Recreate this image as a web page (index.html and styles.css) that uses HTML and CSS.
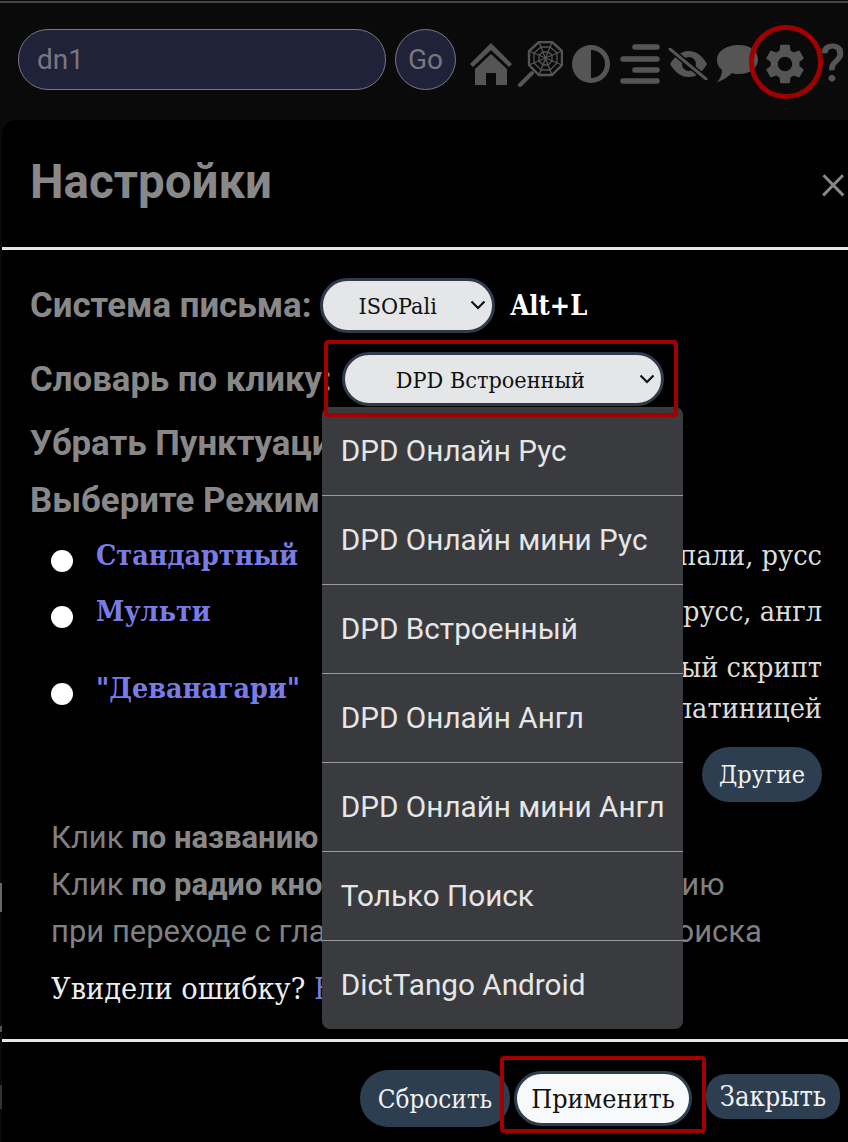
FILE: index.html
```html
<!DOCTYPE html>
<html lang="ru">
<head>
    <meta charset="UTF-8">
    <meta name="viewport" content="width=device-width, initial-scale=1.0">
    <title>Настройки</title>
    <link rel="stylesheet" href="styles.css">
</head>
<body>
    <div class="top-line"></div>
    <div class="edge"></div>
    <header class="toolbar">
        <input class="search" type="text" value="dn1">
        <div class="go">Go</div>
        <div class="icons">
            <svg class="icon" width="42" height="44" viewBox="0 0 42 44">
                <path d="M21 1 L42 22 L39 25 L21 8 L3 25 L0 22 Z"/>
                <path d="M21 12 L37 27 V43 H26 V31 H16 V43 H5 V27 Z"/>
            </svg>
            <svg class="icon web" width="45" height="46" viewBox="0 0 45 46">
                <g fill="none" stroke="#555" stroke-width="1.3">
                    <path d="M21 1 H34 L44 10 V24 L34 34 H21 L11 24 V10 Z" stroke-width="2.4"/>
                    <path d="M23 6 H32 L39 12 V22 L32 29 H23 L16 22 V12 Z"/>
                    <path d="M25 11 H30 L34 14 V20 L30 24 H25 L21 20 V14 Z"/>
                    <path d="M21 1 L34 34 M34 1 L21 34 M11 10 L44 24 M44 10 L11 24"/>
                </g>
                <path d="M14 32 L2 44" stroke="#555" stroke-width="4" stroke-linecap="round"/>
            </svg>
            <svg class="icon contrast" width="40" height="40" viewBox="0 0 40 40">
                <path fill-rule="evenodd" d="M20 1 A19 19 0 1 1 20 39 A19 19 0 1 1 20 1 Z M20 6 V34 A14 14 0 0 0 20 6 Z"/>
            </svg>
            <svg class="icon" width="40" height="40" viewBox="0 0 40 40">
                <g stroke="#555" stroke-width="5.5" stroke-linecap="round">
                    <path d="M15 3 H37"/>
                    <path d="M3 15 H37"/>
                    <path d="M15 26 H37"/>
                    <path d="M3 37 H37"/>
                </g>
            </svg>
            <svg class="icon" width="40" height="32" viewBox="0 0 40 32">
                <path fill-rule="evenodd" d="M2 16 C9 5 16 3 21 3 C27 3 33 6 39 16 C33 26 27 29 21 29 C14 29 8 26 2 16 Z M21 9 A7 7 0 1 0 21 23 A7 7 0 1 0 21 9 Z"/>
                <path d="M2 1 L38 31" stroke="#0a0a0a" stroke-width="6"/>
                <path d="M2 1 L38 31" stroke="#555" stroke-width="3" stroke-linecap="round"/>
            </svg>
            <svg class="icon" width="42" height="38" viewBox="0 0 42 38">
                <path d="M23 0 C34 0 42 6 42 14.500 C42 23 34 29 23 29 C20 29 18 29 16 28 C12 32 6 36 1 37 C4 34 6 30 6 25 C2 22 1 18 1 14.500 C1 6 11 0 23 0 Z"/>
            </svg>
            <svg class="icon" width="38" height="40" viewBox="2.500 2 19 20">
                <path d="M19.14 12.94c.04-.3.06-.61.06-.94 0-.32-.02-.64-.07-.94l2.03-1.58a.49.49 0 0 0 .12-.61l-1.92-3.32a.488.488 0 0 0-.59-.22l-2.39.96c-.5-.38-1.03-.7-1.62-.94l-.36-2.54a.484.484 0 0 0-.48-.41h-3.84c-.24 0-.43.17-.47.41l-.36 2.54c-.59.24-1.13.57-1.62.94l-2.39-.96c-.22-.08-.47 0-.59.22L2.74 8.87c-.12.21-.08.47.12.61l2.03 1.58c-.05.3-.09.63-.09.94s.02.64.07.94l-2.03 1.58a.49.49 0 0 0-.12.61l1.92 3.32c.12.22.37.29.59.22l2.39-.96c.5.38 1.03.7 1.62.94l.36 2.54c.05.24.24.41.48.41h3.84c.24 0 .44-.17.47-.41l.36-2.54c.59-.24 1.13-.56 1.62-.94l2.39.96c.22.08.47 0 .59-.22l1.92-3.32c.12-.22.07-.47-.12-.61l-2.01-1.58zM12 15.6c-1.98 0-3.6-1.62-3.6-3.6s1.62-3.6 3.6-3.6 3.6 1.62 3.6 3.6-1.62 3.6-3.6 3.6z"/>
            </svg>
            <span class="help">?</span>
        </div>
        <div class="gear-mark"></div>
    </header>

    <main class="modal">
        <div class="modal-head">
            <h1>Настройки</h1>
            <span class="close">×</span>
        </div>
        <div class="modal-body">
            <div class="setting first">
                <label>Система письма:</label>
                <div class="select small">
                    <span>ISOPali</span>
                    <svg width="16" height="10" viewBox="0 0 16 10"><path d="M1.500 1.500 L8 8 L14.500 1.500" fill="none" stroke="#111" stroke-width="2.200"/></svg>
                </div>
                <b class="hotkey">Alt+L</b>
            </div>
            <div class="setting second">
                <label>Словарь по клику:</label>
                <div class="dict">
                    <div class="select wide">
                        <span>DPD Встроенный</span>
                        <svg width="16" height="10" viewBox="0 0 16 10"><path d="M1.500 1.500 L8 8 L14.500 1.500" fill="none" stroke="#111" stroke-width="2.200"/></svg>
                    </div>
                    <ul class="menu">
                        <li>DPD Онлайн Рус</li>
                        <li>DPD Онлайн мини Рус</li>
                        <li>DPD Встроенный</li>
                        <li>DPD Онлайн Англ</li>
                        <li>DPD Онлайн мини Англ</li>
                        <li>Только Поиск</li>
                        <li>DictTango Android</li>
                    </ul>
                </div>
            </div>
            <div class="setting third"><label>Убрать Пунктуацию</label></div>
            <div class="setting fourth"><label>Выберите Режим</label></div>

            <div class="modes">
                <div class="mode one">
                    <i class="radio"></i><a>Стандартный</a>
                    <p>Текст пали, русс</p>
                </div>
                <div class="mode two">
                    <i class="radio"></i><a>Мульти</a>
                    <p>Текст пали, русс, англ</p>
                </div>
                <div class="mode three">
                    <i class="radio"></i><a>"Деванагари"</a>
                    <p>Оригинальный скрипт<br>и перевод с латиницей</p>
                </div>
            </div>
            <div class="more"><button class="btn other">Другие</button></div>

            <div class="hints">
                <p>Клик <b>по названию</b> режима</p>
                <p>Клик <b>по радио кнопке</b> выберет по умолчанию</p>
                <p>при переходе с главной страницы или из поиска</p>
            </div>
            <p class="report">Увидели ошибку? <a>Напишите нам</a></p>
        </div>
        <div class="modal-foot">
            <button class="btn reset">Сбросить</button>
            <div class="apply-mark"><button class="btn apply">Применить</button></div>
            <button class="btn shut">Закрыть</button>
        </div>
    </main>
</body>
</html>
```

FILE: styles.css
```css
/* page */
html, body {
    margin: 0;
    height: 1142px;
    overflow: hidden;
}

body {
    background-color: #0a0a0a;
    font-family: "Roboto", sans-serif;
    color: #888;
}

.top-line {
    height: 2px;
    margin-top: 1px;
    background-color: #444;
}

/* bits of the page behind the modal, on the left edge */
.edge {
    position: absolute;
    left: 0;
    top: 883px;
    width: 2px;
    height: 226px;
    background: linear-gradient(#666 0 29px, transparent 29px 143px, #555 143px 149px, transparent 149px 202px, #333 202px);
}

/* toolbar */
.toolbar {
    position: relative;
    display: flex;
    align-items: center;
    height: 117px;
    padding-left: 18px;
    box-sizing: border-box;
    padding-bottom: 4px;
}

.search {
    width: 368px;
    height: 61px;
    box-sizing: border-box;
    padding: 0 18px;
    border: 1px solid #77777f;
    border-radius: 30px;
    background-color: #20223a;
    color: #77777f;
    font-family: "Roboto", sans-serif;
    font-size: 28px;
}

.go {
    width: 61px;
    height: 61px;
    box-sizing: border-box;
    margin-left: 9px;
    border: 1px solid #77777f;
    border-radius: 50%;
    background-color: #20223a;
    color: #77777f;
    font-size: 28px;
    line-height: 59px;
    text-align: center;
}

.icons {
    display: flex;
    align-items: center;
    margin-left: 14px;
    margin-top: 8px;
    gap: 8px;
}

.icon {
    flex: none;
    fill: #555;
}

.web {
    margin-left: -2px;
}

.contrast {
    margin-right: 1px;
}

.help {
    margin-left: 8px;
    color: #555;
    font-size: 52px;
    font-weight: 500;
    line-height: 44px;
}

.gear-mark {
    position: absolute;
    left: 749px;
    top: 22px;
    width: 74px;
    height: 74px;
    box-sizing: border-box;
    border: 5px solid #a00000;
    border-radius: 50%;
}

/* modal */
.modal {
    width: 880px;
    height: 1030px;
    margin-left: 2px;
    border-radius: 14px 0 0 0;
    background-color: #000;
}

.modal-head {
    display: flex;
    align-items: center;
    justify-content: space-between;
    box-sizing: border-box;
    width: 846px;
    height: 130px;
    padding: 0 0 4px 28px;
    border-bottom: 3px solid #e6e6e6;
}

h1 {
    margin: 0;
    font-size: 47.5px;
    font-weight: 700;
    color: #888;
}

.close {
    color: #888;
    font-size: 52px;
    font-weight: 300;
    margin-right: 1px;
}

.modal-body {
    width: 846px;
    height: 789px;
    box-sizing: border-box;
    padding: 26px 26px 0 28px;
}

.setting {
    display: flex;
    align-items: center;
}

.setting label {
    flex: none;
    font-size: 34.8px;
    font-weight: 700;
    color: #888;
}

.first {
    height: 58px;
}

.second {
    height: 77px;
    margin-top: 6px;
}

.third {
    height: 44px;
    margin-top: 4px;
}

.fourth {
    height: 44px;
    margin-top: 13px;
}

.select {
    display: flex;
    align-items: center;
    box-sizing: border-box;
    border: 3px solid #2f3b4b;
    border-radius: 28px;
    background-color: #e5e6e7;
    color: #111;
    font-family: "DejaVu Serif Condensed", "DejaVu Serif", serif;
    font-size: 23.2px;
}

.select span {
    flex: 1;
}

.select svg {
    flex: none;
}

.small {
    width: 175px;
    height: 55px;
    margin-left: 9px;
    padding: 0 6px 0 35px;
}

.hotkey {
    margin-left: 15px;
    color: #fff;
    font-family: "DejaVu Serif Condensed", "DejaVu Serif", serif;
    font-size: 27px;
}

/* red frame and open list of the dictionary select */
.dict {
    position: relative;
    z-index: 1;
    flex: none;
    box-sizing: border-box;
    width: 354px;
    height: 77px;
    margin-left: -8px;
}

.dict::after {
    content: "";
    position: absolute;
    inset: 0;
    z-index: 2;
    box-sizing: border-box;
    border: 4px solid #a00000;
    border-radius: 4px;
    pointer-events: none;
}

.wide {
    position: absolute;
    left: 18px;
    top: 12px;
    z-index: 2;
    width: 322px;
    height: 54px;
    padding: 0 6px 0 51px;
}

.menu {
    position: absolute;
    left: -2px;
    top: 67px;
    width: 361px;
    margin: 0;
    padding: 0;
    list-style: none;
    border-radius: 8px;
    background-color: #3a3b3f;
    color: #e6e6e6;
    font-size: 29.7px;
}

.menu li {
    height: 88px;
    padding-left: 19px;
    line-height: 88px;
    border-bottom: 1px solid #9a9a9a;
}

.menu li:last-child {
    border-bottom: none;
}

/* modes */
.modes {
    margin-left: 21px;
    font-family: "DejaVu Serif Condensed", "DejaVu Serif", serif;
    font-size: 28.6px;
}

.mode {
    display: flex;
    align-items: center;
}

.mode p {
    flex: 1;
    margin: 0;
    color: #ddd;
    text-align: right;
    line-height: 41px;
}

.one {
    height: 56px;
    margin-top: 5px;
}

.two {
    height: 56px;
}

.three {
    height: 98px;
}

.radio {
    width: 22px;
    height: 22px;
    flex: none;
    margin: 12px 23px 0 0;
    border-radius: 50%;
    background-color: #fff;
}

.mode a {
    color: #7b7be6;
    font-size: 28.4px;
    font-weight: 700;
}

.more {
    display: flex;
    justify-content: flex-end;
    margin-top: 10px;
}

.btn {
    box-sizing: border-box;
    border: none;
    background-color: #2c3e50;
    color: #f2f2f2;
    font-family: "DejaVu Serif Condensed", "DejaVu Serif", serif;
    font-size: 25.8px;
    border-radius: 28px;
}

.other {
    width: 120px;
    height: 55px;
    font-size: 25px;
}

/* hints */
.hints {
    margin: 12px 0 0 21px;
    font-size: 31px;
    color: #808080;
}

.hints p {
    margin: 0;
    height: 47px;
    line-height: 47px;
    white-space: nowrap;
}

.hints b {
    color: #888;
}

.report {
    margin: 16px 0 0 21px;
    color: #eee;
    font-family: "DejaVu Serif Condensed", "DejaVu Serif", serif;
    font-size: 30.3px;
}

.report a {
    color: #7b7be6;
}

/* footer */
.modal-foot {
    display: flex;
    align-items: flex-start;
    box-sizing: border-box;
    width: 846px;
    height: 103px;
    padding: 14px 0 0 358px;
    border-top: 3px solid #e6e6e6;
}

.reset {
    width: 150px;
    height: 57px;
    margin-top: 14px;
}

.apply-mark {
    position: relative;
    display: flex;
    justify-content: center;
    box-sizing: border-box;
    width: 206px;
    height: 77px;
    margin-left: -10px;
    padding-top: 11px;
    border: 4px solid #a00000;
    border-radius: 4px;
}

.apply {
    width: 178px;
    height: 55px;
    border: 3px solid #2c3e50;
    background-color: #f8f9fb;
    color: #111;
    font-size: 26.7px;
}

.shut {
    width: 134px;
    height: 45px;
    margin-top: 18px;
    border-radius: 20px;
    font-size: 27px;
}
```
